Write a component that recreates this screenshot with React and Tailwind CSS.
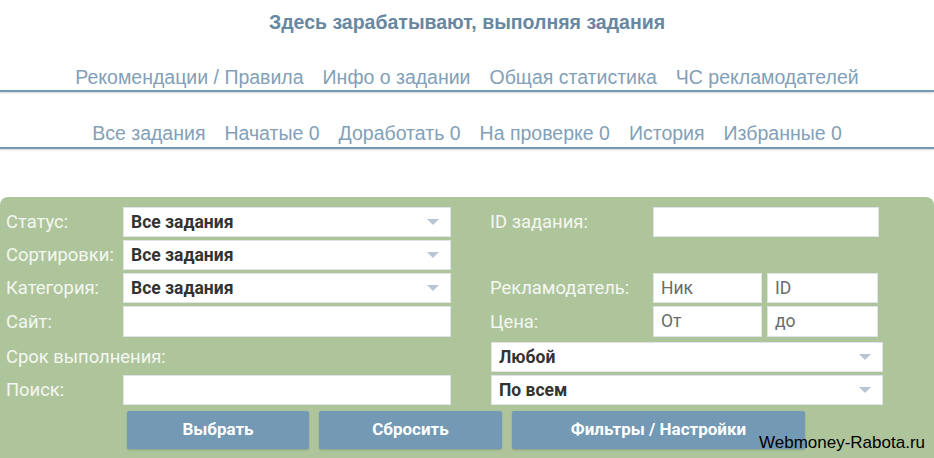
const nav1 = ['Рекомендации / Правила', 'Инфо о задании', 'Общая статистика', 'ЧС рекламодателей']
const nav2 = ['Все задания', 'Начатые 0', 'Доработать 0', 'На проверке 0', 'История', 'Избранные 0']

function Arrow() {
  return (
    <svg width="12" height="6" viewBox="0 0 12 6" className="absolute right-[11px] top-1/2 -translate-y-1/2">
      <path d="M0 0 L12 0 L6 6 Z" fill="#b9c5d2" />
    </svg>
  )
}

function Select({ value, className = '' }) {
  return (
    <div className={`relative h-[30px] bg-white border border-[#dfe4ea] flex items-center pl-[7px] text-[17.5px] font-bold text-[#333] ${className}`}>
      {value}
      <Arrow />
    </div>
  )
}

function Input({ placeholder = '', className = '' }) {
  return (
    <div className={`h-[30px] bg-white border border-[#dfe4ea] flex items-center pl-[7px] text-[17.5px] text-[#6a6a6a] ${className}`}>
      {placeholder}
    </div>
  )
}

function Label({ children, className = '' }) {
  return <div className={`text-[18.4px] text-[#f4f7f1] flex items-center ${className}`}>{children}</div>
}

function NavRow({ items, className = '', lineGap = 'mt-[3px]' }) {
  return (
    <div className={className}>
      <div className="flex justify-center gap-[19px] text-[19.5px] leading-[20px] text-[#82a0b8]">
        {items.map(t => <span key={t}>{t}</span>)}
      </div>
      <div className={`h-[2px] bg-[#7898b2] shadow-[0_1px_2px_rgba(0,0,0,0.18)] ${lineGap}`} />
    </div>
  )
}

export default function App() {
  return (
    <div className="w-[934px] h-[458px] overflow-hidden bg-white relative" style={{ fontFamily: '"Liberation Sans", Arial, sans-serif' }}>
      <h1 className="text-center text-[19.5px] leading-[24px] font-bold text-[#6887a1] pt-[10px]">
        Здесь зарабатывают, выполняя задания
      </h1>

      <NavRow items={nav1} className="mt-[33px]" />
      <NavRow items={nav2} className="mt-[31px]" lineGap="mt-[4px]" />

      <div className="mt-[48px] bg-[#aec59c] rounded-t-[8px] pl-[6px] pt-[10px] pb-[20px]" style={{ fontFamily: 'Roboto, "Liberation Sans", sans-serif' }}>
        <div className="flex flex-col gap-[3px]">
          <div className="flex h-[30px] items-center">
            <Label className="w-[117px]">Статус:</Label>
            <Select value="Все задания" className="w-[328px]" />
            <Label className="ml-[39px] w-[163px]">ID задания:</Label>
            <Input className="w-[226px]" />
          </div>
          <div className="flex h-[30px] items-center">
            <Label className="w-[117px]">Сортировки:</Label>
            <Select value="Все задания" className="w-[328px]" />
          </div>
          <div className="flex h-[30px] items-center">
            <Label className="w-[117px]">Категория:</Label>
            <Select value="Все задания" className="w-[328px]" />
            <Label className="ml-[39px] w-[163px]">Рекламодатель:</Label>
            <Input placeholder="Ник" className="w-[109px]" />
            <Input placeholder="ID" className="w-[111px] ml-[5px]" />
          </div>
          <div className="flex h-[31px] items-center">
            <Label className="w-[117px]">Сайт:</Label>
            <Input className="w-[328px] h-[31px]" />
            <Label className="ml-[39px] w-[163px]">Цена:</Label>
            <Input placeholder="От" className="w-[109px] h-[31px]" />
            <Input placeholder="до" className="w-[111px] h-[31px] ml-[5px]" />
          </div>
          <div className="flex h-[30px] items-center mt-[2px]">
            <Label className="w-[445px]">Срок выполнения:</Label>
            <Select value="Любой" className="ml-[40px] w-[392px]" />
          </div>
          <div className="flex h-[30px] items-center">
            <Label className="w-[117px]">Поиск:</Label>
            <Input className="w-[328px]" />
            <Select value="По всем" className="ml-[40px] w-[392px]" />
          </div>
        </div>

        <div className="flex gap-[10px] ml-[121px] mt-[6px] text-white text-[17px] font-bold">
          <button className="w-[182px] h-[38px] bg-[#7399b5] rounded-[2px] shadow-[0_1px_2px_rgba(0,0,0,0.2)]">Выбрать</button>
          <button className="w-[183px] h-[38px] bg-[#7399b5] rounded-[2px] shadow-[0_1px_2px_rgba(0,0,0,0.2)]">Сбросить</button>
          <button className="w-[293px] h-[38px] bg-[#7399b5] rounded-[2px] shadow-[0_1px_2px_rgba(0,0,0,0.2)]">Фильтры / Настройки</button>
        </div>
      </div>

      <div className="absolute right-[9px] top-[430px] text-[17px] text-black" style={{ fontFamily: '"Liberation Sans", Arial, sans-serif' }}>
        Webmoney-Rabota.ru
      </div>
    </div>
  )
}
